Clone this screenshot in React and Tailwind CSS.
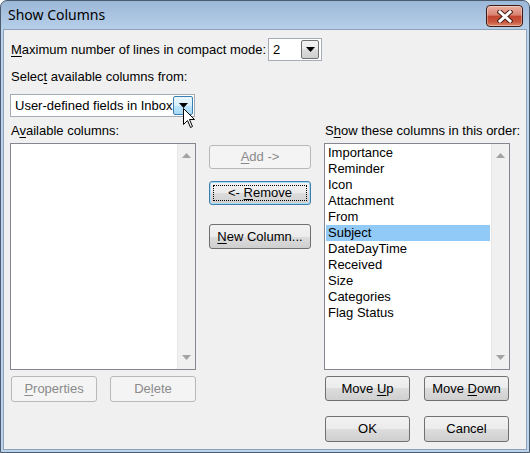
import React from 'react';

const U = ({ children }) => <span className="underline decoration-1 underline-offset-[2px]">{children}</span>;

const normalBg = 'bg-[linear-gradient(to_bottom,#f2f2f2_0%,#ebebeb_50%,#dddddd_50%,#cfcfcf_100%)]';

const Button = ({ children, disabled, focused, h = 'h-[25px]', className = '' }) => {
  let look = `border-[#707070] ${normalBg} text-black`;
  if (disabled) look = 'border-[#b5b9bc] bg-[#f4f4f4] text-[#8a8a8a]';
  if (focused) look = `border-[#3c7fb1] ${normalBg} shadow-[inset_0_0_0_1px_#a9dcf5] text-black`;
  return (
    <div className={`relative flex items-center justify-center rounded-[3px] border ${h} ${look} ${className}`}>
      {focused && <span className="absolute inset-[3px] border border-dotted border-black" />}
      <span className="whitespace-nowrap leading-[16px]">{children}</span>
    </div>
  );
};

const Tri = ({ up, color = '#a3a3a3' }) => (
  <svg width="9" height="5" viewBox="0 0 9 5">
    <path d={up ? 'M0 5 L4.5 0 L9 5 Z' : 'M0 0 L4.5 5 L9 0 Z'} fill={color} />
  </svg>
);

const ListBox = ({ items = [], selected }) => (
  <div className="flex h-[227px] border border-[#828790] bg-white">
    <div className="flex-1 pt-[1px]">
      {items.map((it) => (
        <div
          key={it}
          className={`mx-[1px] h-[16px] pl-[2px] leading-[16px] ${it === selected ? 'bg-[#91c9f7]' : ''}`}
        >
          {it}
        </div>
      ))}
    </div>
    <div className="flex w-[18px] flex-col items-center justify-between border-l border-[#e6e6e6] bg-[#f0f0f0] py-[9px]">
      <Tri up />
      <Tri />
    </div>
  </div>
);

const columns = [
  'Importance',
  'Reminder',
  'Icon',
  'Attachment',
  'From',
  'Subject',
  'DateDayTime',
  'Received',
  'Size',
  'Categories',
  'Flag Status',
];

export default function App() {
  return (
    <div className="relative h-[453px] w-[530px] overflow-hidden rounded-t-[7px] border border-[#4c5b6d] bg-[linear-gradient(to_bottom,#9cb8d8_0px,#b6cfe9_28px,#bcd3ec_28px,#bcd3ec_100%)] font-['Liberation_Sans',Arial,sans-serif] text-[13px] text-black">
      {/* title bar */}
      <div className="flex h-[28px] items-center pl-[7px]">
        <span className="font-['Noto_Sans',sans-serif] text-[14px] leading-[18px]">Show Columns</span>
        <div className="ml-auto mr-[6px] mt-[2px] flex h-[22px] w-[37px] items-center justify-center rounded-[4px] border border-[#3f1a14] bg-[linear-gradient(to_bottom,#eab0a2_0%,#d98271_45%,#c2452f_52%,#c9573e_80%,#dd8a6e_100%)] shadow-[inset_0_0_0_1px_rgba(255,255,255,0.35)]">
          <svg width="16" height="13" viewBox="0 0 16 13">
            <path d="M3 2 L13 11 M13 2 L3 11" stroke="#4a2218" strokeWidth="5" strokeLinecap="square" />
            <path d="M3 2 L13 11 M13 2 L3 11" stroke="#ffffff" strokeWidth="3" strokeLinecap="square" />
          </svg>
        </div>
      </div>

      {/* client area */}
      <div className="mx-[2px] h-[421px] border border-[#8ea3bb] bg-[#f0f0f0] pl-[6px] pt-[8px]">
        <div className="flex h-[23px] items-center">
          <div className="w-[258px] whitespace-nowrap pl-[1px] leading-[16px]">
            <U>M</U>aximum number of lines in compact mode:
          </div>
          <div className="flex h-[23px] w-[54px] border border-[#a5acb5] bg-white p-[1px]">
            <span className="flex-1 pl-[3px] leading-[19px]">2</span>
            <div className={`mr-[1px] flex w-[18px] items-center justify-center rounded-[2px] border border-[#707070] ${normalBg}`}>
              <Tri color="#000000" />
            </div>
          </div>
        </div>

        <div className="mt-[8px] h-[16px] whitespace-nowrap pl-[1px] leading-[16px]">
          Selec<U>t</U> available columns from:
        </div>

        <div className="mt-[9px] flex h-[23px] w-[185px] border border-[#a5acb5] bg-white p-[1px]">
          <span className="flex-1 whitespace-nowrap pl-[3px] leading-[19px]">User-defined fields in Inbox</span>
          <div className="flex w-[20px] items-center justify-center rounded-[2px] border border-[#3c7fb1] bg-[linear-gradient(to_bottom,#eaf6fd_0%,#d9f0fc_50%,#bee6fd_50%,#a7d9f5_100%)]">
            <Tri color="#000000" />
          </div>
        </div>

        <div className="mt-[6px] grid grid-cols-[186px_102px_186px] gap-x-[13px]">
          <div className="flex flex-col">
            <div className="h-[16px] whitespace-nowrap pl-[1px] leading-[16px]">
              A<U>v</U>ailable columns:
            </div>
            <div className="mt-[4px]">
              <ListBox />
            </div>
            <div className="mt-[6px] flex justify-between pl-[1px]">
              <Button disabled h="h-[26px]" className="w-[86px]">
                <U>P</U>roperties
              </Button>
              <Button disabled h="h-[26px]" className="w-[86px]">
                De<U>l</U>ete
              </Button>
            </div>
          </div>

          <div className="flex flex-col pt-[22px]">
            <Button disabled h="h-[24px]">
              <U>A</U>dd -&gt;
            </Button>
            <Button focused h="h-[24px]" className="mt-[12px]">
              &lt;- <U>R</U>emove
            </Button>
            <Button className="mt-[19px]">
              <U>N</U>ew Column...
            </Button>
          </div>

          <div className="flex flex-col">
            <div className="h-[16px] whitespace-nowrap pl-[1px] leading-[16px]">
              S<U>h</U>ow these columns in this order:
            </div>
            <div className="mt-[4px]">
              <ListBox items={columns} selected="Subject" />
            </div>
            <div className="mt-[6px] flex justify-between px-[1px]">
              <Button className="w-[85px]">
                Move <U>U</U>p
              </Button>
              <Button className="w-[85px]">
                Move <U>D</U>own
              </Button>
            </div>
            <div className="mt-[15px] flex justify-between px-[1px]">
              <Button h="h-[26px]" className="w-[85px]">
                OK
              </Button>
              <Button h="h-[26px]" className="w-[85px]">
                Cancel
              </Button>
            </div>
          </div>
        </div>
      </div>

      {/* mouse pointer over the dropdown */}
      <svg className="absolute left-[182px] top-[107px]" width="13" height="21" viewBox="0 0 13 21">
        <path d="M0.5 0.5 L0.5 16.5 L4.5 12.5 L7.5 19.5 L9.5 18.5 L6.5 11.5 L11.5 11.5 Z" fill="#ffffff" stroke="#000000" strokeWidth="1" />
      </svg>
    </div>
  );
}
